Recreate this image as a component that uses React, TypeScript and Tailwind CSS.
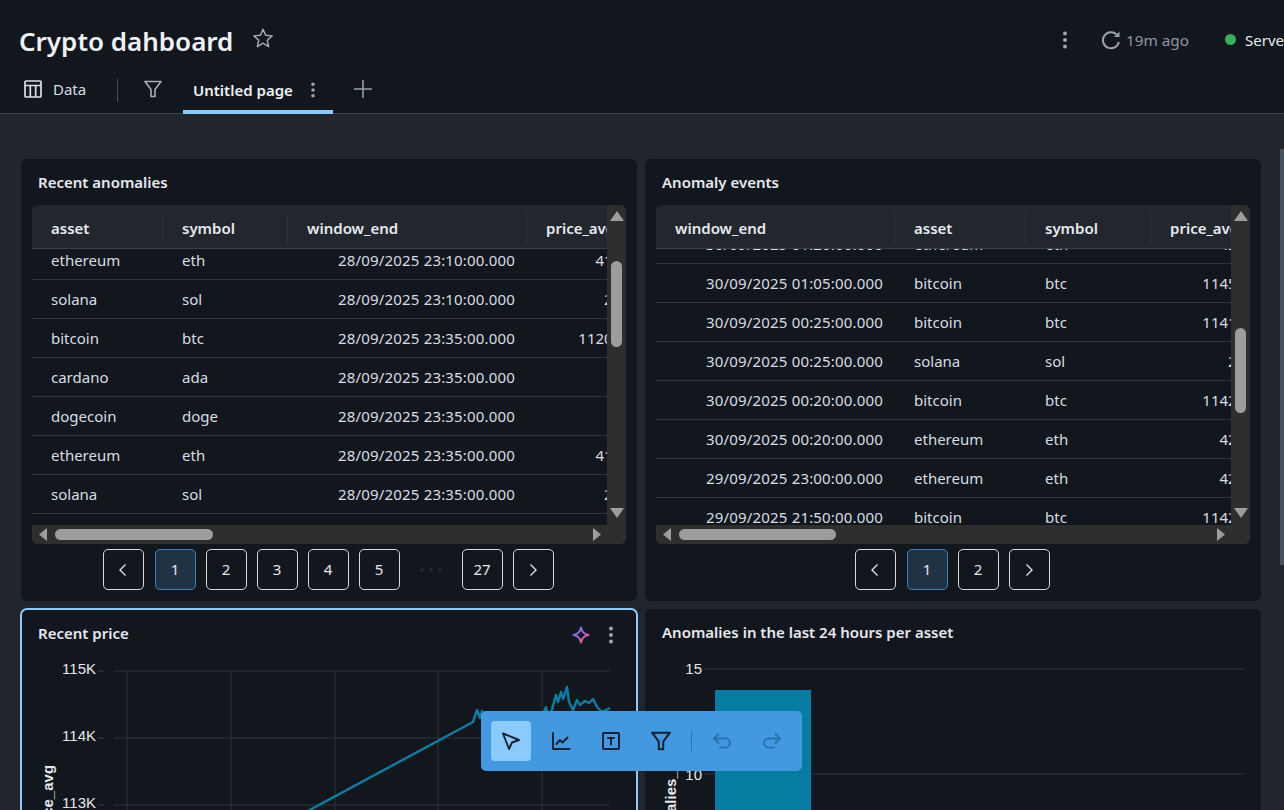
import React from "react";

const dash = "w-[18px] h-[18px] shrink-0";

function Dots({ color = "#9aa4ae", size = "w-[18px] h-[18px]" }: { color?: string; size?: string }) {
  return (
    <svg viewBox="0 0 18 18" className={`${size} shrink-0`} fill={color}>
      <circle cx="9" cy="2.5" r="2" />
      <circle cx="9" cy="9" r="2" />
      <circle cx="9" cy="15.5" r="2" />
    </svg>
  );
}

function TableIcon() {
  return (
    <svg viewBox="0 0 18 18" className={dash} fill="none" stroke="#dde1e6" strokeWidth="1.7">
      <rect x="1" y="1" width="16" height="16" rx="1" />
      <path d="M1 5.5H17M6.3 5.5V17M11.7 5.5V17" />
    </svg>
  );
}

function FunnelIcon({ color = "#a4adb6", cls = dash, w = 1.6 }: { color?: string; cls?: string; w?: number }) {
  return (
    <svg viewBox="0 0 18 18" className={cls} fill="none" stroke={color} strokeWidth={w} strokeLinejoin="round">
      <path d="M1 1.5H17L11 9.5V16.5H7V9.5Z" />
    </svg>
  );
}

function Chevron({ dir }: { dir: "left" | "right" }) {
  return (
    <svg viewBox="0 0 16 16" className="w-[16px] h-[16px]" fill="none" stroke="#e5e7eb" strokeWidth="1.3">
      <path d={dir === "left" ? "M10.5 2.5L5 8L10.5 13.5" : "M5.5 2.5L11 8L5.5 13.5"} />
    </svg>
  );
}

function Tri({ cls, pts, box }: { cls: string; pts: string; box: string }) {
  return (
    <svg viewBox={box} className={cls} fill="#9d9d9d">
      <polygon points={pts} />
    </svg>
  );
}

type Col = { label: string; key: number; cell: string };

const leftCols: Col[] = [
  { label: "asset", key: 0, cell: "w-[131px] pl-[19px]" },
  { label: "symbol", key: 1, cell: "w-[125px] pl-[19px]" },
  { label: "window_end", key: 2, cell: "w-[239px] pr-[12px] justify-end tracking-[0.17px]" },
  { label: "price_avg", key: 3, cell: "w-[136px] pr-[12px] justify-end" },
];
const leftHead = ["w-[131px]", "w-[125px]", "w-[239px]", "w-[132px]"];

const rightCols: Col[] = [
  { label: "window_end", key: 2, cell: "w-[239px] pr-[12px] justify-end tracking-[0.17px]" },
  { label: "asset", key: 0, cell: "w-[131px] pl-[19px]" },
  { label: "symbol", key: 1, cell: "w-[125px] pl-[19px]" },
  { label: "price_avg", key: 3, cell: "w-[136px] pr-[12px] justify-end" },
];
const rightHead = ["w-[239px]", "w-[131px]", "w-[125px]", "w-[132px]"];

const leftRows = [
  ["ethereum", "eth", "28/09/2025 23:10:00.000", "4136.25"],
  ["solana", "sol", "28/09/2025 23:10:00.000", "208.31"],
  ["bitcoin", "btc", "28/09/2025 23:35:00.000", "112011.25"],
  ["cardano", "ada", "28/09/2025 23:35:00.000", "0.80"],
  ["dogecoin", "doge", "28/09/2025 23:35:00.000", "0.23"],
  ["ethereum", "eth", "28/09/2025 23:35:00.000", "4142.10"],
  ["solana", "sol", "28/09/2025 23:35:00.000", "209.12"],
  ["bitcoin", "btc", "28/09/2025 23:40:00.000", "112040.50"],
];

const rightRows = [
  ["ethereum", "eth", "30/09/2025 01:20:00.000", "4221.40"],
  ["bitcoin", "btc", "30/09/2025 01:05:00.000", "114511.20"],
  ["bitcoin", "btc", "30/09/2025 00:25:00.000", "114122.75"],
  ["solana", "sol", "30/09/2025 00:25:00.000", "208.65"],
  ["bitcoin", "btc", "30/09/2025 00:20:00.000", "114233.10"],
  ["ethereum", "eth", "30/09/2025 00:20:00.000", "4210.85"],
  ["ethereum", "eth", "29/09/2025 23:00:00.000", "4225.30"],
  ["bitcoin", "btc", "29/09/2025 21:50:00.000", "114260.45"],
];

function DataTable({
  cols,
  head,
  rows,
  shift,
  vThumb,
  hThumb,
}: {
  cols: Col[];
  head: string[];
  rows: string[][];
  shift: string;
  vThumb: string;
  hThumb: string;
}) {
  return (
    <div className="relative mx-[11px] h-[339px] rounded-md overflow-hidden">
      <div className="relative z-10 flex items-center pt-[4px] h-[44px] bg-[#22272e] border-b border-[#3a4048] overflow-hidden">
        {cols.map((c, i) => (
          <div
            key={c.label}
            className={`${head[i]} shrink-0 h-[30px] flex items-center pl-[19px] border-r border-[#2f353c] text-[15px] font-semibold text-[#e6e9ee] whitespace-nowrap`}
          >
            {c.label}
          </div>
        ))}
      </div>
      <div className="w-[575px] h-[276px] overflow-hidden">
        <div className={shift}>
          {rows.map((r, i) => (
            <div key={i} className="flex h-[39px] w-[627px] border-b border-[#30353c] text-[15px] text-[#d9dde2]">
              {cols.map((c) => (
                <div key={c.label} className={`${c.cell} shrink-0 flex items-center whitespace-nowrap`}>
                  {r[c.key]}
                </div>
              ))}
            </div>
          ))}
        </div>
      </div>
      <div className="absolute z-20 top-0 right-0 bottom-0 w-[19px] bg-[#2e2e2e]">
        <Tri box="0 0 14 10" cls="absolute top-[6px] left-[3px] w-[14px] h-[10px]" pts="7,0 14,10 0,10" />
        <div className={vThumb} />
        <Tri box="0 0 14 10" cls="absolute top-[303px] left-[3px] w-[14px] h-[10px]" pts="0,0 14,0 7,10" />
      </div>
      <div className="absolute z-20 left-0 right-0 bottom-0 h-[19px] bg-[#2e2e2e]">
        <Tri box="0 0 8 13" cls="absolute top-[3px] left-[7px] w-[8px] h-[13px]" pts="8,0 8,13 0,6.5" />
        <div className={hThumb} />
        <Tri box="0 0 8 13" cls="absolute top-[3px] left-[561px] w-[8px] h-[13px]" pts="0,0 0,13 8,6.5" />
      </div>
    </div>
  );
}

const pageBase = "w-[41px] h-[41px] rounded-[5px] border flex items-center justify-center text-[15px] text-[#e5e7eb]";

function Page({ label, active }: { label: string; active?: boolean }) {
  return (
    <div className={`${pageBase} ${active ? "ml-px bg-[#1f3344] border-[#3f7fb5]" : "border-[#d5d8dc]"}`}>{label}</div>
  );
}

function Pager({ pages, tail }: { pages: string[]; tail?: string }) {
  return (
    <div className="flex justify-center items-center gap-[10px] mt-[5px] pr-[2px]">
      <div className={`${pageBase} border-[#d5d8dc]`}>
        <Chevron dir="left" />
      </div>
      {pages.map((p, i) => (
        <Page key={p} label={p} active={i === 0} />
      ))}
      {tail && (
        <>
          <div className="w-[42px] h-[41px] flex items-center justify-center gap-[5px]">
            <span className="w-[4px] h-[4px] rounded-full bg-[#23282f]" />
            <span className="w-[4px] h-[4px] rounded-full bg-[#23282f]" />
            <span className="w-[4px] h-[4px] rounded-full bg-[#23282f]" />
          </div>
          <Page label={tail} />
        </>
      )}
      <div className={`${pageBase} border-[#d5d8dc]`}>
        <Chevron dir="right" />
      </div>
    </div>
  );
}

function Title({ text }: { text: string }) {
  return <div className="h-[20px] leading-[20px] text-[15px] font-semibold text-[#e6e9ee] px-[17px]">{text}</div>;
}

const linePts =
  "306,810 473,720 477,708 480,716 482,709 485,712 488,710 490,714 544,710 546,705 548,713 552,708 554,700 556,693 558,700 561,690 563,697 567,685 569,700 573,708 577,698 580,703 585,699 589,701 593,697 597,705 602,710 608,707 610,706";

function PriceChart() {
  const ys = [669, 736, 803];
  const xs = [127, 231, 335, 438, 542];
  return (
    <svg viewBox="21 643 616 200" className="block w-[616px] h-[200px]">
      {ys.map((y) => (
        <g key={y}>
          <line x1="98" x2="104" y1={y} y2={y} stroke="#3a3f46" />
          <line x1="114" x2="610" y1={y} y2={y} stroke="#2e333a" />
        </g>
      ))}
      {xs.map((x) => (
        <line key={x} x1={x} x2={x} y1="669" y2="843" stroke="#2e333a" />
      ))}
      <polyline points={linePts} fill="none" stroke="#0a7fa3" strokeWidth="2.4" strokeLinejoin="round" />
      {["115K", "114K", "113K"].map((t, i) => (
        <text key={t} x="96" y={ys[i] + 4} textAnchor="end" fill="#e5e7eb" fontSize="15" fontFamily="Liberation Sans, sans-serif" dy="-1">
          {t}
        </text>
      ))}
      <text
        transform="translate(53 833) rotate(-90)"
        fill="#e5e7eb"
        fontSize="15"
        fontWeight="700"
        fontFamily="Liberation Sans, sans-serif"
      >
        price_avg
      </text>
    </svg>
  );
}

function BarChart() {
  return (
    <svg viewBox="645 643 616 200" className="block w-[616px] h-[200px]">
      <line x1="704" x2="1245" y1="669" y2="669" stroke="#2e333a" />
      <line x1="704" x2="1245" y1="774" y2="774" stroke="#2e333a" />
      <rect x="715" y="690" width="96" height="160" fill="#067ca3" />
      <text x="702" y="674" textAnchor="end" fill="#e5e7eb" fontSize="15" fontFamily="Liberation Sans, sans-serif">
        15
      </text>
      <text x="702" y="780" textAnchor="end" fill="#e5e7eb" fontSize="15" fontFamily="Liberation Sans, sans-serif">
        10
      </text>
      <text
        transform="translate(676 852) rotate(-90)"
        fill="#e5e7eb"
        fontSize="15"
        fontWeight="700"
        fontFamily="Liberation Sans, sans-serif"
      >
        anomalies_count
      </text>
    </svg>
  );
}

function ToolIcon({ children, stroke = "#12202f" }: { children: React.ReactNode; stroke?: string }) {
  return (
    <svg viewBox="0 0 20 20" className="w-[20px] h-[20px]" fill="none" stroke={stroke} strokeWidth="1.9" strokeLinejoin="round" strokeLinecap="round">
      {children}
    </svg>
  );
}

function Toolbar() {
  const b = "w-[40px] h-[40px] rounded-[4px] flex items-center justify-center";
  return (
    <div className="absolute left-[481px] top-[711px] w-[321px] h-[60px] rounded-[5px] bg-[#4299e0] flex items-center px-[10px] gap-[10px]">
      <div className={`${b} bg-[#8acaff]`}>
        <ToolIcon>
          <path d="M2 2.5L18 9L11 11.5L8 18Z" />
        </ToolIcon>
      </div>
      <div className={b}>
        <ToolIcon>
          <path d="M2 2V18H18.5" />
          <path d="M5.5 13L9 9L11.5 11.5L16.5 6.5" />
        </ToolIcon>
      </div>
      <div className={b}>
        <ToolIcon>
          <rect x="2" y="2" width="16" height="16" rx="1" />
          <path d="M7 7H13M10 7V13.5" />
        </ToolIcon>
      </div>
      <div className={b}>
        <FunnelIcon color="#12202f" cls="w-[20px] h-[20px]" w={1.8} />
      </div>
      <div className="w-px h-[20px] bg-[#2b73ab]" />
      <div className={b}>
        <ToolIcon stroke="#2b73ab">
          <path d="M6.5 3L2 7.5L6.5 12" />
          <path d="M2 7.5H13.5C16 7.5 18 9.5 18 12C18 14.5 16 16.5 13.5 16.5H8" />
        </ToolIcon>
      </div>
      <div className={b}>
        <ToolIcon stroke="#2b73ab">
          <path d="M13.5 3L18 7.5L13.5 12" />
          <path d="M18 7.5H6.5C4 7.5 2 9.5 2 12C2 14.5 4 16.5 6.5 16.5H12" />
        </ToolIcon>
      </div>
    </div>
  );
}

export default function App() {
  return (
    <div className="relative w-full h-[810px] overflow-hidden bg-[#21262d] font-['Noto_Sans',sans-serif] text-[#e6e9ee]">
      <header className="h-[114px] bg-[#12171e] border-b border-[#3a4048]">
        <div className="h-[65px] pt-[14px] flex items-center pl-[19px] overflow-hidden">
          <div className="w-[1037px] shrink-0 flex items-center">
            <h1 className="w-[213px] mt-[2px] text-[26px] font-semibold leading-[36px] text-[#eef1f5] whitespace-nowrap">Crypto dahboard</h1>
            <svg viewBox="0 0 24 24" className="ml-[20px] -mt-[3px] w-[22px] h-[22px] shrink-0" fill="none" stroke="#a4adb6" strokeWidth="1.6" strokeLinejoin="round">
              <path d="M12 2.5L14.9 9L22 9.7L16.6 14.4L18.2 21.4L12 17.7L5.8 21.4L7.4 14.4L2 9.7L9.1 9Z" />
            </svg>
          </div>
          <Dots color="#9aa4ae" />
          <svg viewBox="0 0 20 20" className="ml-[27px] w-[20px] h-[20px] shrink-0" fill="none" stroke="#9aa4ae" strokeWidth="2">
            <path d="M15.5 4.5A8 8 0 1 0 17.8 12" />
            <path d="M18.5 1.5V7H13Z" fill="#9aa4ae" stroke="none" />
          </svg>
          <span className="ml-[5px] mt-px w-[63px] shrink-0 text-[15.3px] text-[#8d97a1] whitespace-nowrap">19m ago</span>
          <span className="ml-[36px] w-[11px] h-[11px] shrink-0 rounded-full bg-[#37b05c]" />
          <span className="ml-[9px] mt-px shrink-0 text-[15px] text-[#e6e9ee] whitespace-nowrap">Serverless</span>
        </div>
        <div className="h-[49px] flex items-center">
          <div className="ml-[24px] -mt-[2px]">
            <TableIcon />
          </div>
          <span className="ml-[11px] w-[34px] text-[15px] text-[#d9dde2]">Data</span>
          <span className="ml-[30px] mt-[2px] w-px h-[23px] bg-[#4a5058]" />
          <div className="ml-[26px] -mt-[2px]">
            <FunnelIcon />
          </div>
          <div className="ml-[21px] w-[150px] h-[49px] pl-[10px] pt-[5px] flex items-center border-b-4 border-[#8acaff]">
            <span className="w-[100px] text-[15px] font-semibold text-[#eef1f5] whitespace-nowrap">Untitled page</span>
            <div className="ml-[12px]">
              <Dots size="w-[16px] h-[16px]" />
            </div>
          </div>
          <svg viewBox="0 0 18 18" className="ml-[21px] -mt-[2px] w-[18px] h-[18px]" stroke="#9aa4ae" strokeWidth="1.5">
            <path d="M9 0V18M0 9H18" />
          </svg>
        </div>
      </header>

      <main className="pt-[45px] pl-[21px] grid grid-cols-[616px_616px] gap-[8px]">
        <section className="h-[442px] rounded-md bg-[#12171e] pt-[13px]">
          <Title text="Recent anomalies" />
          <div className="mt-[13px]">
            <DataTable
              cols={leftCols}
              head={leftHead}
              rows={leftRows}
              shift="-mt-[8px]"
              vThumb="absolute left-[4px] top-[56px] w-[11px] h-[86px] rounded-full bg-[#9d9d9d]"
              hThumb="absolute left-[23px] top-[4px] w-[158px] h-[11px] rounded-full bg-[#9d9d9d]"
            />
          </div>
          <Pager pages={["1", "2", "3", "4", "5"]} tail="27" />
        </section>
        <section className="h-[442px] rounded-md bg-[#12171e] pt-[13px]">
          <Title text="Anomaly events" />
          <div className="mt-[13px]">
            <DataTable
              cols={rightCols}
              head={rightHead}
              rows={rightRows}
              shift="-mt-[24px]"
              vThumb="absolute left-[4px] top-[123px] w-[11px] h-[85px] rounded-full bg-[#9d9d9d]"
              hThumb="absolute left-[23px] top-[4px] w-[157px] h-[11px] rounded-full bg-[#9d9d9d]"
            />
          </div>
          <Pager pages={["1", "2"]} />
        </section>
        <section className="relative h-[442px] rounded-md bg-[#12171e] pt-[13px] outline-2 outline-[#8acaff] -outline-offset-1">
          <div className="flex items-center pr-[17px] mb-px">
            <div className="flex-1">
              <Title text="Recent price" />
            </div>
            <svg viewBox="0 0 18 18" className="w-[18px] h-[18px] mt-[4px]" fill="none" strokeWidth="2" strokeLinejoin="round">
              <defs>
                <linearGradient id="spark" x1="0" y1="0" x2="1" y2="1">
                  <stop offset="0" stopColor="#4299e0" />
                  <stop offset="0.5" stopColor="#a45bd0" />
                  <stop offset="1" stopColor="#ff5f6d" />
                </linearGradient>
              </defs>
              <path d="M9 1.5C9.8 6 12 8.2 16.5 9C12 9.8 9.8 12 9 16.5C8.2 12 6 9.8 1.5 9C6 8.2 8.2 6 9 1.5Z" stroke="url(#spark)" />
            </svg>
            <div className="ml-[12px] mt-[4px]">
              <Dots size="w-[18px] h-[18px]" />
            </div>
          </div>
          <PriceChart />
        </section>
        <section className="h-[442px] rounded-md bg-[#12171e] pt-[13px]">
          <div className="mb-px">
            <Title text="Anomalies in the last 24 hours per asset" />
          </div>
          <BarChart />
        </section>
      </main>

      <div className="absolute right-0 top-[149px] w-[4px] h-[416px] bg-[#46535f]" />
      <Toolbar />
    </div>
  );
}
